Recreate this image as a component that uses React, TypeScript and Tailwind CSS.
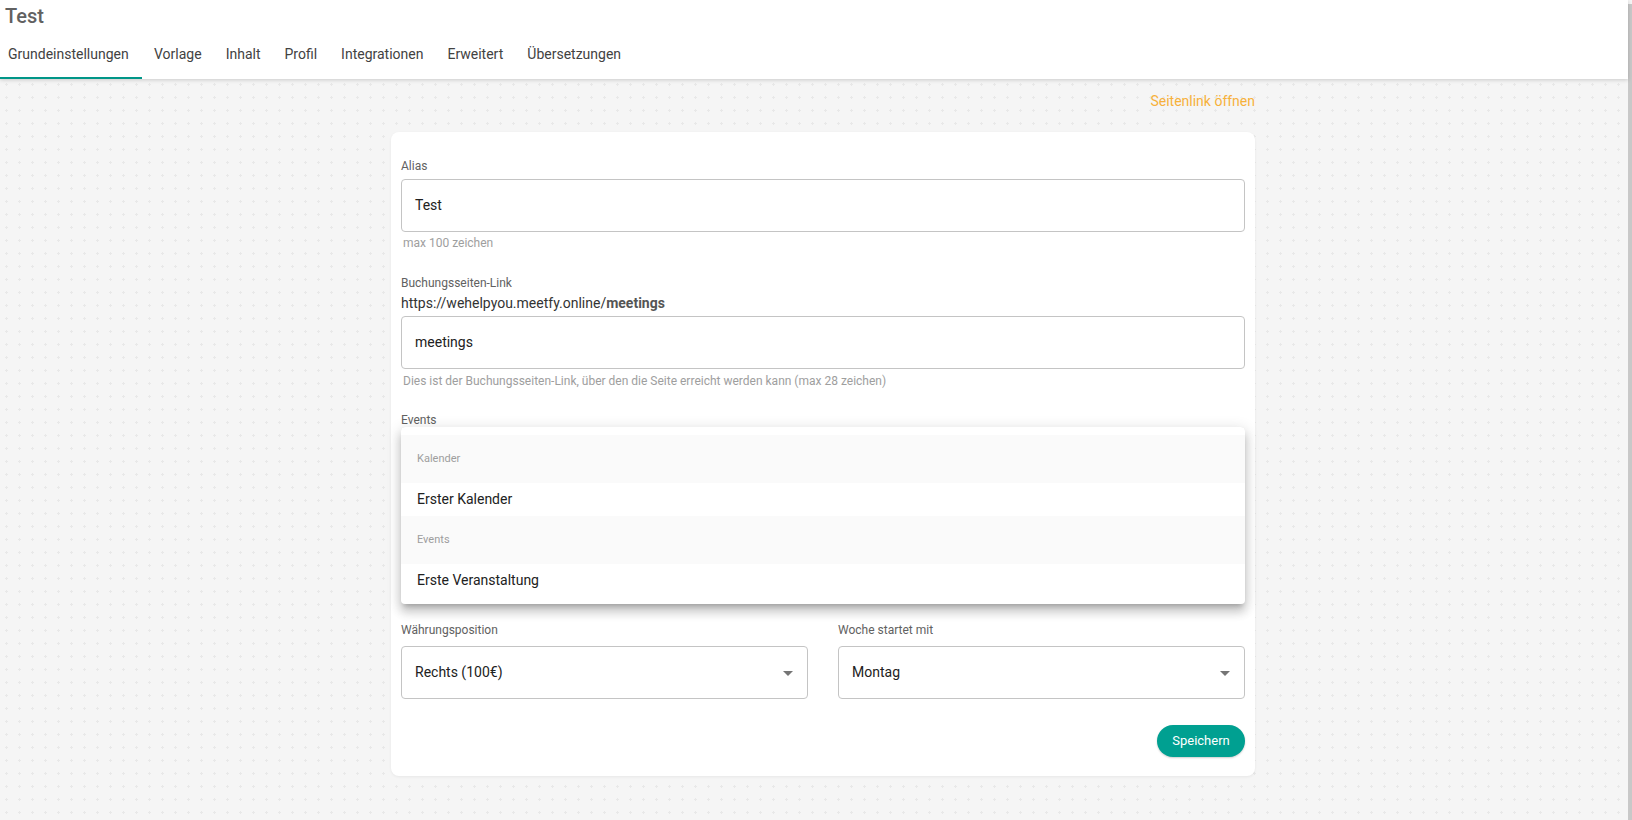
import React from 'react';

const tabs = ['Grundeinstellungen', 'Vorlage', 'Inhalt', 'Profil', 'Integrationen', 'Erweitert', 'Übersetzungen'];

const ArrowDrop = () => (
  <svg viewBox="0 0 24 24" className="w-6 h-6 absolute right-[7px] top-1/2 -translate-y-1/2 fill-[#757575]">
    <path d="M7 10l5 5 5-5z" />
  </svg>
);

const Label = ({ children }: { children: React.ReactNode }) => (
  <div className="text-[12px] leading-4 text-[#616161]">{children}</div>
);

const Field = ({ value, select }: { value: string; select?: boolean }) => (
  <div className="relative h-[53px] rounded-[4px] border border-[#c4c4c4] bg-white pl-[13px] flex items-center text-[14px] text-[#212121]">
    {value}
    {select && <ArrowDrop />}
  </div>
);

const Helper = ({ children }: { children: React.ReactNode }) => (
  <div className="text-[12px] leading-4 text-[#9e9e9e] pl-[2px]">{children}</div>
);

const App = () => {
  return (
    <div className="flex min-h-[820px] font-['Roboto',sans-serif] bg-[#f5f5f5] bg-[radial-gradient(#e8e8e8_1px,transparent_1.2px)] bg-[length:13px_13px]">
      <div className="flex-1 min-w-0">
        <header className="bg-white h-[79px] shadow-[0_1px_4px_rgba(0,0,0,0.18)] relative z-10 flex flex-col">
          <div className="h-[32px] flex items-center pl-[5px] text-[20px] font-medium text-[#616161]">Test</div>
          <nav className="flex flex-1">
            {tabs.map((tab, i) => (
              <div
                key={tab}
                className={
                  i === 0
                    ? 'pl-2 flex items-center text-[14px] text-[#424242] border-b-2 border-[#009688] w-[142px]'
                    : 'px-3 flex items-center text-[14px] text-[#424242] border-b-2 border-transparent'
                }
              >
                {tab}
              </div>
            ))}
          </nav>
        </header>

        <main className="ml-[391px] w-[864px] pb-10">
          <div className="mt-3 h-5 flex items-center justify-end text-[14px] text-[#f7b13b]">Seitenlink öffnen</div>

          <div className="mt-[21px] bg-white rounded-lg shadow-[0_1px_3px_rgba(0,0,0,0.06)] px-[10px] pt-[26px] pb-[19px]">
            <Label>Alias</Label>
            <div className="mt-[5px]">
              <Field value="Test" />
            </div>
            <div className="mt-[3px]">
              <Helper>max 100 zeichen</Helper>
            </div>

            <div className="mt-6">
              <Label>Buchungsseiten-Link</Label>
            </div>
            <div className="mt-[2px] text-[14px] leading-5 text-[#333333]">
              https://wehelpyou.meetfy.online/<span className="font-bold text-[#555555]">meetings</span>
            </div>
            <div className="mt-[3px]">
              <Field value="meetings" />
            </div>
            <div className="mt-1">
              <Helper>Dies ist der Buchungsseiten-Link, über den die Seite erreicht werden kann (max 28 zeichen)</Helper>
            </div>

            <div className="mt-[23px]">
              <Label>Events</Label>
            </div>
            <div className="relative -mt-px h-[195px]">
              <Field value="" select />
              <div className="absolute left-0 right-0 top-0 z-20 bg-white rounded-[4px] py-2 shadow-[0_5px_5px_-3px_rgba(0,0,0,0.2),0_8px_10px_1px_rgba(0,0,0,0.14),0_3px_14px_2px_rgba(0,0,0,0.12)]">
                <div className="h-12 bg-[#fafafa] flex items-center pl-4 text-[11px] text-[#9e9e9e]">Kalender</div>
                <div className="h-[33px] flex items-center pl-4 text-[14px] text-[#212121]">Erster Kalender</div>
                <div className="h-12 bg-[#fafafa] flex items-center pl-4 text-[11px] text-[#9e9e9e]">Events</div>
                <div className="h-[32px] flex items-center pl-4 text-[14px] text-[#212121]">Erste Veranstaltung</div>
              </div>
            </div>

            <div className="grid grid-cols-2 gap-[30px]">
              <div>
                <Label>Währungsposition</Label>
                <div className="mt-2">
                  <Field value="Rechts (100€)" select />
                </div>
              </div>
              <div>
                <Label>Woche startet mit</Label>
                <div className="mt-2">
                  <Field value="Montag" select />
                </div>
              </div>
            </div>

            <div className="mt-[26px] flex justify-end">
              <button className="h-8 w-[88px] rounded-full bg-[#00a091] text-white text-[13px] shadow-[0_1px_2px_rgba(0,0,0,0.2)]">
                Speichern
              </button>
            </div>
          </div>
        </main>
      </div>
      <div className="w-1 mt-1 bg-[#c8c8c8]" />
    </div>
  );
};

export default App;
